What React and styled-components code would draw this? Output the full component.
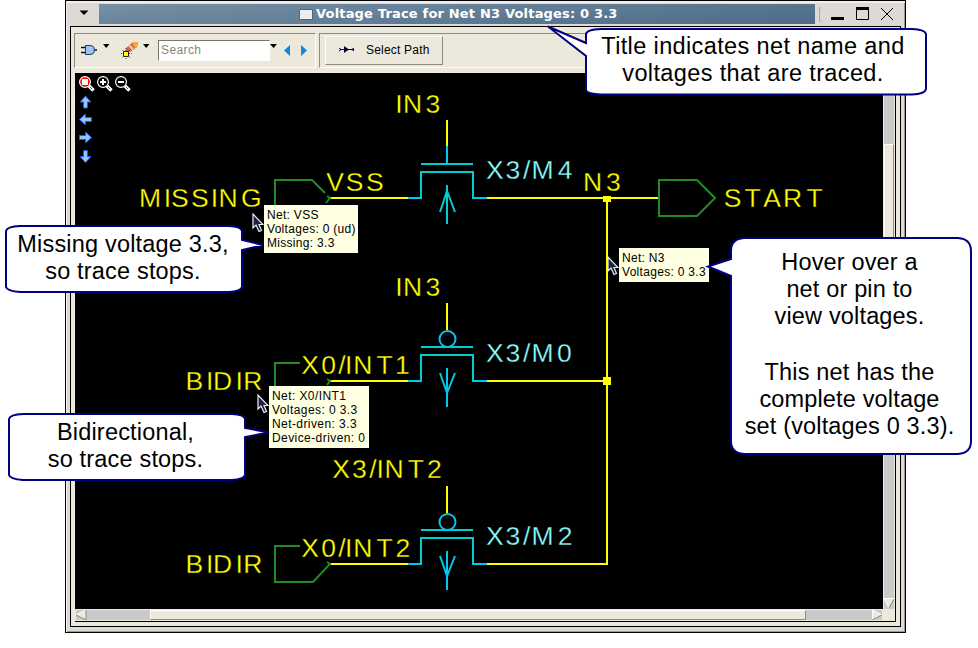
import React from 'react';
import styled, { createGlobalStyle } from 'styled-components';

const Global = createGlobalStyle`
  body { margin: 0; background: #fff; font-family: "Liberation Sans", Arial, sans-serif; }
  * { box-sizing: border-box; }
  svg { display: block; flex: none; }
`;

const Page = styled.main`
  position: relative;
  width: 978px;
  height: 648px;
  overflow: hidden;
  padding-left: 65px;
`;

const Window = styled.section`
  width: 841px;
  height: 633px;
  display: flex;
  flex-direction: column;
  padding: 3px 4px 5px;
  background: #dddad6;
  border: 1px solid #000;
  box-shadow: inset 1px 2px #f4edf0, inset -1px -1px #9c9995;
`;

const TitleBar = styled.header`
  height: 20px;
  display: flex;
  flex: none;
  margin-bottom: 2px;
`;

const MenuButton = styled.button`
  width: 29px;
  padding: 0 0 2px 9px;
  display: flex;
  align-items: center;
  border: 0;
  background: none;
`;

const Title = styled.h1`
  width: 716px;
  margin: 0;
  padding-left: 200px;
  display: flex;
  align-items: center;
  gap: 3px;
  color: #fff;
  background: linear-gradient(176deg, #7690a4, #4d6b87);
  font: bold 13px/20px "DejaVu Sans", sans-serif;
  letter-spacing: 0.18px;
  white-space: pre;
`;

const WindowControls = styled.div`
  display: flex;
  padding: 3px 0 0 4px;
`;

const Body = styled.div`
  flex: 1;
  display: flex;
  flex-direction: column;
  border: 1px solid #000;
  background: #ece9dc;
  padding: 6px 4px 4px 3px;
`;

const Toolbar = styled.div`
  height: 35px;
  display: flex;
  gap: 3px;
  margin-bottom: 5px;
`;

const ToolGroup = styled.div`
  width: ${p => p.$width || 'auto'};
  flex: ${p => (p.$width ? 'none' : 1)};
  display: flex;
  border: 1px solid;
  border-color: #8d8a82 #fff #fff #8d8a82;
`;

const SearchBox = styled.div`
  width: 112px;
  height: 21px;
  margin: 6px 0 0 5px;
  padding-left: 2px;
  border: 1px solid;
  border-color: #77756f #fff #fff #77756f;
  background: #fff;
  color: #858585;
  font-size: 12px;
  line-height: 18px;
  letter-spacing: 0.4px;
`;

const PathButton = styled.button`
  width: 118px;
  height: 29px;
  margin: 2px 0 0 5px;
  padding: 0 0 2px 13px;
  display: flex;
  align-items: center;
  gap: 11px;
  border: 1px solid;
  border-color: #fff #8d8a82 #8d8a82 #fff;
  background: #ece9dc;
  color: #000;
  font: 12px "Liberation Sans", sans-serif;
  letter-spacing: 0.2px;
`;

const Viewport = styled.div`
  width: 821px;
  height: 549px;
  margin-left: 1px;
  display: grid;
  grid-template-columns: 808px 12px;
  grid-template-rows: 536px 12px;
  background: #ece9dc;
  border-right: 1px solid #000;
  border-bottom: 1px solid #000;
`;

const Canvas = styled.div`
  background: #000;
`;

const Scrollbar = styled.div`
  display: flex;
  flex-direction: ${p => (p.$vertical ? 'column' : 'row')};
  margin: ${p => (p.$vertical ? '0 1px 0 1px' : '1px 1px 1px 1px')};
  background: #c9cbca;
`;

const Gutter = styled.div`
  flex: 0 0 ${p => p.$size}px;
`;

const Thumb = styled.div`
  flex: 0 0 ${p => p.$size}px;
  background: #ece9dc;
  border: 1px solid;
  border-color: #fff #8d8a82 #8d8a82 #fff;
`;

const Tip = styled.div`
  position: absolute;
  left: ${p => p.$x}px;
  top: ${p => p.$y}px;
  width: ${p => p.$w}px;
  height: ${p => p.$h}px;
  padding: 3px 0 0 3px;
  background: #ffffe1;
  color: #000;
  font-size: 12px;
  line-height: 14px;
  letter-spacing: ${p => p.$tracking || 0.3}px;
  white-space: pre;
`;

const Pointer = styled.svg`
  position: absolute;
  left: ${p => p.$x}px;
  top: ${p => p.$y}px;
`;

const CalloutLayer = styled.aside`
  position: absolute;
  left: ${p => p.$x}px;
  top: ${p => p.$y}px;
  width: ${p => p.$w}px;
  height: ${p => p.$h}px;
  display: flex;
  flex-direction: column;
  align-items: center;
  padding-top: ${p => p.$pad}px;
  color: #000;
  font-size: 23.5px;
  line-height: 27px;
  letter-spacing: ${p => p.$tracking}px;
  white-space: pre;
`;

const CalloutShape = styled.svg`
  position: absolute;
  left: 0;
  top: 0;
  overflow: visible;
`;

const CalloutLine = styled.div`
  position: relative;
  height: ${p => (p.$blank ? 29 : 27)}px;
  left: ${p => p.$shift || 0}px;
`;

const Label = styled.text`
  font: 26.5px "Liberation Sans", sans-serif;
  fill: ${p => p.$color || '#ffff00'};
  stroke: #000;
  stroke-width: 0.3px;
`;

function Callout({ x, y, w, h, pad, path, lines, shift, tracking = 0.18 }) {
  return (
    <CalloutLayer $x={x} $y={y} $w={w} $h={h} $pad={pad} $tracking={tracking}>
      <CalloutShape width={w} height={h}>
        <path d={path} fill="#fff" stroke="#000080" strokeWidth="2" />
      </CalloutShape>
      {lines.map((line, i) => (
        <CalloutLine key={i} $shift={shift} $blank={!line}>{line}</CalloutLine>
      ))}
    </CalloutLayer>
  );
}

function Cursor({ x, y }) {
  return (
    <Pointer $x={x} $y={y} width="12" height="20">
      <path d="M1 1V15L4 12L7 18.500L9.500 17.500L7 11.500H11Z" fill="#1c2340" stroke="#e9e9f2" strokeWidth="1.2" />
    </Pointer>
  );
}

function Transistor({ y, name, last, pmos }) {
  return (
    <g>
      <g fill="none" strokeWidth="2" stroke="#00ced1">
        <path d={`M421 ${y - 34}H473M421 ${y + 1}V${y - 26}H473V${y + 1}`} />
        <path stroke="#00c8ee" d={`M408 ${y}H421M474 ${y}H487`} />
        {pmos ? (
          <>
            <circle cx="447.500" cy={y - 42} r="8" stroke="#00c8ee" />
            <path d={`M447 ${y - 13}V${y + 26}M440 ${y - 8}L447 ${y + 12}L455 ${y - 8}`} stroke="#00c8ee" />
            <path stroke="#ffff00" d={`M447 ${y - 78}V${y - 51}`} />
          </>
        ) : (
          <>
            <path d={`M447 ${y - 52}V${y - 35}`} stroke="#00c8ee" />
            <path d={`M447 ${y - 13}V${y + 26}M440 ${y + 14}L447 ${y - 7}L455 ${y + 14}`} />
            <path stroke="#ffff00" d={`M447 ${y - 78}V${y - 52}`} />
          </>
        )}
      </g>
      <Label x={`486 505.6 523 531.5 ${last}`} y={y - 19} $color="#8cffff">{name}</Label>
    </g>
  );
}

const navArrow = 'M6 .5L11.500 6.500H8V12.500H4V6.500H.5Z';

function Magnifier({ x, kind }) {
  return (
    <g transform={`translate(${x} 3)`}>
      <path d="M10 10L14.500 14.500" stroke="#fff" strokeWidth="3.500" />
      <path d="M11 11L13.500 13.500" stroke="#000" strokeWidth="1" strokeDasharray="1 1" />
      <circle cx="6" cy="6" r="5.400" fill={kind === 'fit' ? '#f00' : '#000'} stroke="#fff" strokeWidth="1.2" />
      {kind === 'fit' && <path d="M3 3H9V9H3Z" fill="#fff" />}
      {kind === 'in' && <path d="M3 6H9M6 3V9" stroke="#fff" strokeWidth="2" />}
      {kind === 'out' && <path d="M3 6H9" stroke="#fff" strokeWidth="2" />}
    </g>
  );
}

const netLabels = [
  ['IN3', 113, '395.3 403 425.5'],
  ['MISSING', 207, '139 163.8 171.1 191.1 210.8 218.6 241'],
  ['VSS', 191, '326.3 345.8 366.1'],
  ['N3', 191, '583 606'],
  ['START', 207, '723.8 744.4 763.3 783 806.4'],
  ['IN3', 296, '395.3 403 425.5'],
  ['BIDIR', 390, '185.6 206 213 235.5 243.2'],
  ['X0/INT1', 374, '301.3 321.2 338.3 345 353.2 376.4 395'],
  ['X3/INT2', 478, '332.3 352 369.3 376.4 384.6 407.7 427'],
  ['BIDIR', 573, '185.6 206 213 235.5 243.2'],
  ['X0/INT2', 557, '301.3 321.2 338.3 345 353.2 376.4 395.5'],
];

function Schematic() {
  return (
    <svg width="808" height="536" viewBox="75 73 808 536">
      <g transform="translate(75 73)">
        <Magnifier x={4} kind="fit" />
        <Magnifier x={22} kind="in" />
        <Magnifier x={40} kind="out" />
        {[[29, 0], [46.5, -90], [64.5, 90], [83.5, 180]].map(([y, turn]) => (
          <path key={y} d={navArrow} transform={`translate(4.500 ${y - 6.5}) rotate(${turn} 6 6.500)`} fill="#92c4ff" stroke="#2450ea" />
        ))}
      </g>
      <g fill="none" stroke="#ffff00" strokeWidth="2">
        <path d="M330 198H408M487 198H659M607 198V565M330 381H408M487 381H607M330 564H408M487 564H608" />
      </g>
      <path d="M603 196H611V202H603ZM603 377H611V385H603Z" fill="#ffff00" />
      <g fill="none" stroke="#228b22" strokeWidth="2">
        <path d="M659 180H697L715 198L697 216H659Z" />
        <path d="M275 205V180H312L325 193M327 196L330 198L326 203" />
        <path d="M275 386V363H300M327 379L330 381L327 385" />
        <path d="M300 546H275V582H313L330 564L327 562" />
      </g>
      <Transistor y={198} name="X3/M4" last={557.7} />
      <Transistor y={381} name="X3/M0" last={557} pmos />
      <Transistor y={564} name="X3/M2" last={557.8} pmos />
      {netLabels.map(([text, y, x]) => (
        <Label key={text + y} x={x} y={y}>{text}</Label>
      ))}
    </svg>
  );
}

function NetIcons() {
  return (
    <svg width="78" height="33" viewBox="75 34 78 33">
      <path d="M81 47.500H86M81 52.500H86M94 50H97" stroke="#111" strokeWidth="1.500" />
      <path d="M85.500 45.500H91Q94.500 46 94.500 50Q94.500 54 91 54.500H85.500Z" fill="#9cc5f5" stroke="#1c3a66" />
      <path d="M103 44H109.500L106.200 48ZM143 44H149.500L146.200 48Z" fill="#000" />
      <path d="M126 48L133 42H138L137 47L130 52L126 51Z" fill="#d9604a" />
      <path d="M132 43L133.500 42H138L137 46.500L135 48Z" fill="#f5a53a" />
      <path d="M129 45L133 49.500" stroke="#d5c9c6" strokeWidth="2.500" />
      <path d="M121 53.500H131.500M126 48V59.500M122.500 50L130 57.500M130 50L122.500 57.500" stroke="#333" strokeDasharray="1 1" />
      <path d="M123.500 51.500H128.500V56.500H123.500Z" fill="#ff0" stroke="#222" />
    </svg>
  );
}

export default function App() {
  return (
    <>
      <Global />
      <Page>
        <Window>
          <TitleBar>
            <MenuButton aria-label="Window menu">
              <svg width="11" height="6"><path d="M.5 .5H9.500L5 5Z" /></svg>
            </MenuButton>
            <Title>
              <svg width="14" height="11"><path d="M.5 .5H13.500V10.500H.5Z" fill="#eceef0" stroke="#566773" /></svg>
              Voltage Trace for Net N3 Voltages: 0 3.3
            </Title>
            <WindowControls>
              <svg width="78" height="15" viewBox="819 7 78 15">
                <path d="M821.500 8H819.500V21H821.500" fill="none" stroke="#a9a7a3" />
                <path d="M831 17H844V20H831Z" />
                <path d="M856.500 19.500V8.500H868.500V19.500Z" fill="none" stroke="#000" />
                <path d="M856 7H869V10H856Z" />
                <path d="M881 8L893 20M893 8L881 20" stroke="#000" />
              </svg>
            </WindowControls>
          </TitleBar>
          <Body>
            <Toolbar>
              <ToolGroup $width="242px">
                <NetIcons />
                <SearchBox>Search</SearchBox>
                <svg width="42" height="33" viewBox="270 34 42 33">
                  <path d="M270 44H277L273.500 48Z" />
                  <path d="M290 45V56L284 50.500ZM301 45V56L307 50.500Z" fill="#1684dc" />
                </svg>
              </ToolGroup>
              <ToolGroup>
                <PathButton>
                  <svg width="16" height="9">
                    <path d="M1 4.500H15" stroke="#000040" /><path d="M5 1V8L10 4.500Z" fill="#000040" />
                    <path d="M0 3L2 4.500L0 6M15 3L13 4.500L15 6" fill="none" stroke="#000040" />
                  </svg>
                  Select Path
                </PathButton>
              </ToolGroup>
            </Toolbar>
            <Viewport>
              <Canvas><Schematic /></Canvas>
              <Scrollbar $vertical>
                <Gutter $size={71} />
                <Thumb $size={300} />
                <Gutter $size={154} />
                <svg width="10" height="11"><path d="M0 0H10L5 10Z" fill="#ece9dc" /><path d="M5 10L0 .5H10" fill="none" stroke="#fff" /><path d="M10 1L5 10" stroke="#8d8a82" /></svg>
              </Scrollbar>
              <Scrollbar>
                <svg width="11" height="10"><path d="M10 0V10L0 5Z" fill="#ece9dc" /><path d="M0 5L10 0" stroke="#fff" /><path d="M10 0V10L0 5" fill="none" stroke="#8d8a82" /></svg>
                <Gutter $size={63} />
                <Thumb $size={656} />
                <Gutter $size={66} />
                <svg width="10" height="10"><path d="M0 0V10L10 5Z" fill="#ece9dc" /><path d="M.5 10V0L10 5" fill="none" stroke="#fff" /><path d="M0 10L10 5" stroke="#8d8a82" /></svg>
              </Scrollbar>
            </Viewport>
          </Body>
        </Window>

        <Tip $x={264} $y={205} $w={94} $h={48}>{'Net: VSS\nVoltages: 0 (ud)\nMissing: 3.3'}</Tip>
        <Tip $x={269} $y={386} $w={100} $h={62} $tracking={0.42}>{'Net: X0/INT1\nVoltages: 0 3.3\nNet-driven: 3.3\nDevice-driven: 0'}</Tip>
        <Tip $x={619} $y={248} $w={90} $h={34}>{'Net: N3\nVoltages: 0 3.3'}</Tip>
        <Cursor x={252} y={213} />
        <Cursor x={257} y={394} />
        <Cursor x={607} y={256} />

        <Callout x={585} y={28} w={342} h={68} pad={5} tracking={0.37}
          path="M1 15L-37 -1.500L1 28V62Q2 66 16 66.500H327Q340 66 341 61V6Q340 1.500 327 1H16Q2 1.500 1 6Z"
          lines={['Title indicates net name and', 'voltages that are traced.']} shift={-3} />
        <Callout x={5} y={225} w={238} h={68} pad={6}
          path="M15 1H224Q236 1.500 237 6V15L258 20L237 25V62Q236 66 224 67H15Q2 66 1 62V6Q2 1.500 15 1Z"
          lines={['Missing voltage 3.3,', 'so trace stops.']} shift={-1} />
        <Callout x={8} y={413} w={238} h={68} pad={6}
          path="M15 1H224Q236 1.500 237 6V15L261 19.500L237 24V62Q236 66 224 67H15Q2 66 1 62V6Q2 1.500 15 1Z"
          lines={['Bidirectional,', 'so trace stops.']} shift={-1.5} />
        <Callout x={730} y={237} w={242} h={218} pad={12} tracking={0.16}
          path="M14 1H228Q241 2 241 14V204Q241 216 228 217H14Q1 216 1 204V39L-22 29.500L1 22V14Q1 2 14 1Z"
          lines={['Hover over a', 'net or pin to', 'view voltages.', '', 'This net has the', 'complete voltage', 'set (voltages 0 3.3).']} shift={-1.5} />
      </Page>
    </>
  );
}
